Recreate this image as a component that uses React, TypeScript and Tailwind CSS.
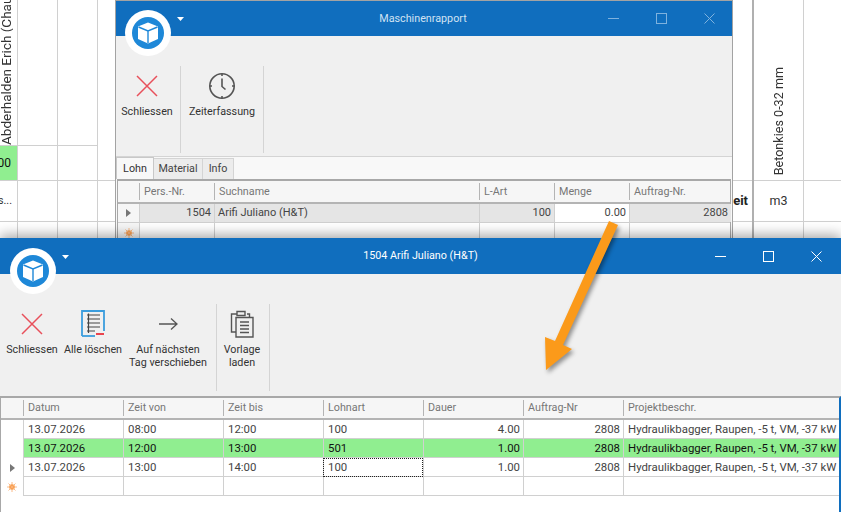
import React from 'react'

const CubeLogo = () => (
  <div className="w-[46px] h-[46px] rounded-full bg-white flex items-center justify-center">
    <svg width="32" height="32" viewBox="0 0 32 32">
      <circle cx="16" cy="16" r="16" fill="#1e88d8" />
      <path d="M16 5.5 L26 9.5 V22 L16 26.5 L6 22 V9.5 Z" fill="#fff" />
      <path d="M6.5 10 L16 14 L25.5 10 M16 14 V26" fill="none" stroke="#1e88d8" strokeWidth="1.4" />
    </svg>
  </div>
)

const Caret = () => (
  <svg width="7" height="4" viewBox="0 0 7 4">
    <path d="M0 0H7L3.5 4Z" fill="#fff" />
  </svg>
)

const CloseIcon = () => (
  <svg width="22" height="22" viewBox="0 0 22 22">
    <path d="M1 1L21 21M21 1L1 21" stroke="#e8505b" strokeWidth="1.5" />
  </svg>
)

const ClockIcon = () => (
  <svg width="28" height="28" viewBox="0 0 28 28" fill="none" stroke="#555" strokeWidth="1.6">
    <circle cx="14" cy="14" r="12.2" />
    <path d="M14 6.5V14.5L17.5 17.5" />
    <path d="M14 1.5V4M14 24V26.5M1.5 14H4M24 14H26.5" />
  </svg>
)

const ClearIcon = () => (
  <svg width="24" height="27" viewBox="0 0 24 27" fill="none">
    <path d="M1 26V1H23V21" stroke="#3b9ddd" strokeWidth="1.8" />
    <path d="M1 26H14" stroke="#3b9ddd" strokeWidth="1.8" />
    <path d="M6 5H19M6 9H19M6 13H19M6 17H19M6 21H14M7.5 3.5V23" stroke="#444" strokeWidth="1.2" />
    <path d="M15 24H23" stroke="#e8303c" strokeWidth="1.8" />
  </svg>
)

const ArrowIcon = () => (
  <svg width="19" height="14" viewBox="0 0 19 14" fill="none" stroke="#555" strokeWidth="1.3">
    <path d="M0 7H18M12 1.5L18 7L12 12.5" />
  </svg>
)

const ClipboardIcon = () => (
  <svg width="24" height="28" viewBox="0 0 24 28" fill="none" stroke="#555" strokeWidth="1.4">
    <path d="M6 22H1.5V4H7M17 4H19.5V7" />
    <path d="M7 5.5V1.5H15V5.5H7Z" />
    <path d="M6 7.5H23V27H6Z" />
    <path d="M10 12H19M10 15.5H19M10 19H19M10 22.5H19" />
  </svg>
)

const RowArrow = () => (
  <svg width="5" height="8" viewBox="0 0 5 8">
    <path d="M0 0L5 4L0 8Z" fill="#777" />
  </svg>
)

const NewRowStar = () => (
  <svg width="10" height="10" viewBox="0 0 10 10">
    <circle cx="5" cy="5" r="2.8" fill="#f79232" />
    <path d="M5 0V10M0 5H10M1.5 1.5L8.5 8.5M8.5 1.5L1.5 8.5" stroke="#f9b27a" strokeWidth="0.9" />
  </svg>
)

const WindowButtons = ({ light }: { light?: boolean }) => {
  const color = light ? '#7fb2de' : '#ffffff'
  return (
    <div className="flex items-center">
      <div className="w-12 flex justify-center">
        <svg width="11" height="11" viewBox="0 0 11 11"><path d="M0 5.5H11" stroke={color} /></svg>
      </div>
      <div className="w-12 flex justify-center">
        <svg width="11" height="11" viewBox="0 0 11 11"><rect x="0.5" y="0.5" width="10" height="10" fill="none" stroke={color} /></svg>
      </div>
      <div className="w-12 flex justify-center">
        <svg width="11" height="11" viewBox="0 0 11 11"><path d="M0.5 0.5L10.5 10.5M10.5 0.5L0.5 10.5" stroke={color} /></svg>
      </div>
    </div>
  )
}

const ToolButton = ({ width, icon, lines }: { width: string; icon: React.ReactNode; lines: string[] }) => (
  <div className={`${width} flex flex-col items-center`}>
    <div className="h-[39px] flex items-center justify-center">{icon}</div>
    <div className="text-center leading-[13px] text-[#333]">
      {lines.map(line => (
        <div key={line} className="whitespace-nowrap">{line}</div>
      ))}
    </div>
  </div>
)

const Separator = () => <div className="w-px h-[87px] bg-[#d4d4d4]" />

const upperCols = [
  { name: 'Pers.-Nr.', w: 'w-[75px]', value: '1504', right: true },
  { name: 'Suchname', w: 'w-[265px]', value: 'Arifi Juliano (H&T)' },
  { name: 'L-Art', w: 'w-[75px]', value: '100', right: true },
  { name: 'Menge', w: 'w-[75px]', value: '0.00', right: true, edit: true },
  { name: 'Auftrag-Nr.', w: 'w-[102px]', value: '2808', right: true },
]

const lowerCols = [
  { name: 'Datum', w: 'w-[100px]' },
  { name: 'Zeit von', w: 'w-[100px]' },
  { name: 'Zeit bis', w: 'w-[100px]' },
  { name: 'Lohnart', w: 'w-[100px]' },
  { name: 'Dauer', w: 'w-[100px]' },
  { name: 'Auftrag-Nr', w: 'w-[100px]' },
  { name: 'Projektbeschr.', w: 'w-[216px]' },
]

const project = 'Hydraulikbagger, Raupen, -5 t, VM, -37 kW'

const lowerRows = [
  { cells: ['13.07.2026', '08:00', '12:00', '100', '4.00', '2808', project] },
  { cells: ['13.07.2026', '12:00', '13:00', '501', '1.00', '2808', project], green: true },
  { cells: ['13.07.2026', '13:00', '14:00', '100', '1.00', '2808', project], current: true },
  { cells: ['', '', '', '', '', '', ''], isNew: true },
]

const UpperWindow = () => (
  <div className="absolute left-[115px] top-0 w-[618px] h-[238px] flex flex-col bg-[#f8f8f8] border-t border-x border-[#a3a3a3] overflow-hidden">
    <div className="relative h-[35px] shrink-0 bg-[#106ebe] flex items-center justify-end">
      <div className="absolute left-[9px] top-[9px] z-10"><CubeLogo /></div>
      <div className="absolute left-[61px] top-[16px]"><Caret /></div>
      <span className="absolute left-0 right-0 text-center text-[#cfe2f3] pr-[2px]">Maschinenrapport</span>
      <div className="-mr-px"><WindowButtons light /></div>
    </div>
    <div className="h-[121px] shrink-0 bg-[#f0f0f0] border-b border-[#d4d4d4] flex items-start pt-[30px]">
      <ToolButton width="w-[64px] pr-[2px]" icon={<CloseIcon />} lines={['Schliessen']} />
      <Separator />
      <ToolButton width="w-[82px]" icon={<ClockIcon />} lines={['Zeiterfassung']} />
      <Separator />
    </div>
    <div className="h-[22px] shrink-0 flex items-end">
      <div className="w-[38px] h-[22px] bg-[#f8f8f8] border border-b-0 border-[#c8c8c8] flex items-center justify-center text-[#333]">Lohn</div>
      <div className="w-[49px] h-[21px] bg-[#ececec] border-r border-t border-[#d4d4d4] flex items-center justify-center text-[#444]">Material</div>
      <div className="w-[31px] h-[21px] bg-[#ececec] border-r border-t border-[#d4d4d4] flex items-center justify-center text-[#444]">Info</div>
    </div>
    <div className="flex-1 mx-px border-t-2 border-x border-[#a8a8a8] bg-white">
      <div className="h-[23px] flex bg-[#f6f6f6] border-b-2 border-[#b4b4b4]">
        <div className="w-[21px] shrink-0" />
        {upperCols.map(col => (
          <div key={col.name} className={`${col.w} shrink-0 flex items-center pl-[4px] text-[#777] border-l border-[#b4b4b4] my-[2px]`}>
            {col.name}
          </div>
        ))}
      </div>
      <div className="h-[19px] flex border-b border-[#d0d0d0] text-[11px]">
        <div className="w-[21px] shrink-0 flex items-center justify-center bg-[#f6f6f6]"><RowArrow /></div>
        {upperCols.map(col => (
          <div
            key={col.name}
            className={`${col.w} shrink-0 flex items-center px-[3px] whitespace-nowrap text-[#444] border-l border-[#d0d0d0] ${col.right ? 'justify-end' : ''} ${col.edit ? 'bg-white' : 'bg-[#e5e5e5]'}`}
          >
            {col.value}
          </div>
        ))}
      </div>
      <div className="h-[19px] flex">
        <div className="w-[21px] shrink-0 flex items-center justify-center bg-[#f6f6f6]"><NewRowStar /></div>
        {upperCols.map(col => (
          <div key={col.name} className={`${col.w} shrink-0 border-l border-[#d0d0d0]`} />
        ))}
      </div>
    </div>
  </div>
)

const LowerWindow = () => (
  <div className="absolute left-0 top-[238px] w-[841px] h-[274px] flex flex-col bg-white shadow-[0_-3px_12px_rgba(0,0,0,0.35)]">
    <div className="relative h-[36px] shrink-0 bg-[#106ebe] flex items-center justify-end pr-[1px]">
      <div className="absolute left-[10px] top-[10px] z-10"><CubeLogo /></div>
      <div className="absolute left-[62px] top-[17px]"><Caret /></div>
      <span className="absolute left-0 right-0 text-center text-white">1504 Arifi Juliano (H&amp;T)</span>
      <WindowButtons />
    </div>
    <div className="h-[122px] shrink-0 bg-[#f0f0f0] flex items-start pt-[30px]">
      <ToolButton width="w-[64px]" icon={<CloseIcon />} lines={['Schliessen']} />
      <ToolButton width="w-[58px]" icon={<ClearIcon />} lines={['Alle löschen']} />
      <ToolButton width="w-[94px] pr-[2px]" icon={<ArrowIcon />} lines={['Auf nächsten', 'Tag verschieben']} />
      <Separator />
      <ToolButton width="w-[52px] pr-[2px]" icon={<ClipboardIcon />} lines={['Vorlage', 'laden']} />
      <Separator />
    </div>
    <div className="flex-1 border-t-2 border-l border-r-2 border-t-[#a8a8a8] border-l-[#a8a8a8] border-r-[#106ebe] bg-white">
      <div className="h-[22px] flex bg-[#f6f6f6] border-b-2 border-[#b4b4b4]">
        <div className="w-[22px] shrink-0" />
        {lowerCols.map(col => (
          <div key={col.name} className={`${col.w} shrink-0 flex items-center pl-[4px] text-[#777] border-l border-[#b4b4b4] my-[2px]`}>
            {col.name}
          </div>
        ))}
      </div>
      {lowerRows.map((row, index) => (
        <div key={index} className="h-[19px] flex text-[11.4px]">
          <div className="w-[22px] shrink-0 flex items-center justify-center">
            {row.current && <RowArrow />}
            {row.isNew && <NewRowStar />}
          </div>
          {lowerCols.map((col, i) => {
            const right = i === 4 || i === 5
            const focused = row.current && i === 3
            return (
              <div
                key={col.name}
                className={`${col.w} shrink-0 flex items-center pl-[4px] pr-[3px] whitespace-nowrap border-l border-b border-[#d0d0d0] ${right ? 'justify-end' : ''} ${row.green ? 'bg-[#90ee90] text-[#111]' : 'text-[#444]'} ${focused ? 'outline-1 outline-dotted outline-[#222] -outline-offset-1' : ''}`}
              >
                {row.cells[i]}
              </div>
            )
          })}
        </div>
      ))}
    </div>
  </div>
)

const OrangeArrow = () => (
  <svg className="absolute left-[535px] top-[215px] drop-shadow-[2px_3px_2px_rgba(0,0,0,0.4)]" width="95" height="165" viewBox="0 0 95 165">
    <path d="M74 6 L83 10 L28 130 L37 134 L11 155 L10 122 L20 126 Z" fill="#fb9a1a" />
  </svg>
)

// Table in the background, mostly hidden by the two windows
const BackgroundSheet = () => (
  <div className="flex h-[238px] text-[#333]">
    <div className="w-[18px] border-r border-[#d0d0d0] flex flex-col overflow-hidden">
      <div className="h-[146px] border-b border-[#d0d0d0] flex items-end">
        <span className="[writing-mode:vertical-rl] rotate-180 whitespace-nowrap text-[13.5px] leading-[13px] h-[145px] overflow-hidden text-left">Abderhalden Erich (Chauffeur)</span>
      </div>
      <div className="h-[35px] border-b border-[#d0d0d0] bg-[#90ee90] flex items-center justify-end text-[#111] text-[12px] pr-[6px]">00</div>
      <div className="h-[41px] border-b border-[#d0d0d0] flex items-center justify-end pr-[5px]">s...</div>
    </div>
    {[0, 1].map(i => (
      <div key={i} className="w-[40px] border-r border-[#d0d0d0] flex flex-col">
        <div className="h-[146px] border-b border-[#d0d0d0]" />
        <div className="h-[35px] border-b border-[#d0d0d0]" />
        <div className="h-[41px] border-b border-[#d0d0d0]" />
      </div>
    ))}
    <div className="w-[654px] flex flex-col">
      <div className="h-[181px] border-b border-[#d0d0d0]" />
      <div className="h-[41px] border-b border-[#d0d0d0] flex items-center justify-end font-bold text-[13px] text-[#222] pr-[4px]">eit</div>
      <div className="flex-1 flex justify-start pl-[618px] font-bold text-[13px] text-[#222]">s</div>
    </div>
    <div className="w-[52px] border-x-2 border-r border-l-[#b0b0b0] border-r-[#d0d0d0] flex flex-col">
      <div className="h-[181px] border-b border-[#d0d0d0] flex items-end justify-center">
        <span className="[writing-mode:vertical-rl] rotate-180 whitespace-nowrap text-[12.6px] pt-[5px]">Betonkies 0-32 mm</span>
      </div>
      <div className="h-[41px] border-b border-[#d0d0d0] flex items-center justify-center text-[12.5px]">m3</div>
    </div>
    <div className="flex-1 flex flex-col">
      <div className="h-[181px] border-b border-[#d0d0d0]" />
      <div className="h-[41px] border-b border-[#d0d0d0]" />
    </div>
  </div>
)

export default function App() {
  return (
    <div className="relative w-[841px] h-[512px] overflow-hidden bg-white text-[10.75px] leading-[14px] font-['Roboto',sans-serif]">
      <BackgroundSheet />
      <UpperWindow />
      <LowerWindow />
      <OrangeArrow />
    </div>
  )
}
